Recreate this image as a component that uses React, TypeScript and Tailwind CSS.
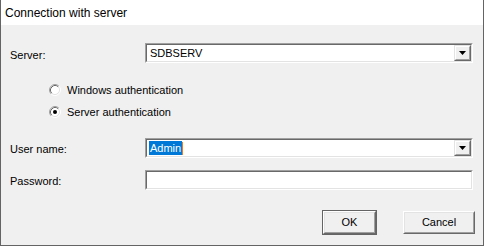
import React from 'react';

const font = { fontFamily: '"Liberation Sans", Arial, sans-serif' };

const Sunken = ({ children, className = '' }: { children?: React.ReactNode; className?: string }) => (
  <div className={`border border-t-[#a0a0a0] border-l-[#a0a0a0] border-b-white border-r-white ${className}`}>
    <div className="h-full border border-t-[#696969] border-l-[#696969] border-b-[#e3e3e3] border-r-[#e3e3e3] bg-white flex items-center">
      {children}
    </div>
  </div>
);

const DropButton = () => (
  <div className="h-[16px] w-[17px] border border-t-[#e3e3e3] border-l-[#e3e3e3] border-b-[#696969] border-r-[#696969] bg-[#f0f0f0]">
    <div className="h-full border border-t-white border-l-white border-b-[#a0a0a0] border-r-[#a0a0a0] flex items-center justify-center">
      <svg width="7" height="4" viewBox="0 0 7 4">
        <path d="M0 0h7L3.5 4z" fill="#000" />
      </svg>
    </div>
  </div>
);

const Radio = ({ checked }: { checked?: boolean }) => (
  <svg width="12" height="12" viewBox="0 0 12 12">
    <circle cx="6" cy="6" r="4.5" fill="#fff" />
    <path d="M2.11 9.89A5.5 5.5 0 0 1 9.89 2.11" fill="none" stroke="#a0a0a0" />
    <path d="M9.89 2.11A5.5 5.5 0 0 1 2.11 9.89" fill="none" stroke="#fff" />
    <path d="M2.82 9.18A4.5 4.5 0 0 1 9.18 2.82" fill="none" stroke="#696969" />
    <path d="M9.18 2.82A4.5 4.5 0 0 1 2.82 9.18" fill="none" stroke="#e3e3e3" />
    {checked && <circle cx="6" cy="6" r="2" fill="#000" />}
  </svg>
);

const Button = ({ label, isDefault, width }: { label: string; isDefault?: boolean; width: string }) => (
  <div className={`h-[25px] ${width} border ${isDefault ? 'border-[#646464]' : 'border-transparent'}`}>
    <div className="h-full border border-t-white border-l-white border-b-[#696969] border-r-[#696969] bg-[#f0f0f0]">
      <div className="h-full border border-t-[#e3e3e3] border-l-[#e3e3e3] border-b-[#a0a0a0] border-r-[#a0a0a0] flex items-center justify-center text-[11px] text-black">
        {label}
      </div>
    </div>
  </div>
);

export default function App() {
  return (
    <div className="w-[485px] h-[247px] bg-white" style={font}>
      <div className="w-[484px] h-[246px] border-x border-b border-[#646464] flex flex-col">
        <div className="h-[25px] bg-white flex items-center pl-[4px] text-[12px] text-black">
          Connection with server
        </div>
        <div className="flex-1 bg-[#f0f0f0] pl-[9px] pr-[9px] pt-[18px] text-[11px] text-black">
          <div className="flex h-[20px]">
            <div className="w-[135px] pt-[4px]">Server:</div>
            <Sunken className="w-[328px] h-[20px]">
              <span className="pl-[3px] flex-1">SDBSERV</span>
              <DropButton />
            </Sunken>
          </div>
          <div className="ml-[39px] mt-[21px] flex flex-col gap-[10px]">
            <div className="flex items-center h-[12px] gap-[6px]">
              <Radio />
              <span>Windows authentication</span>
            </div>
            <div className="flex items-center h-[12px] gap-[6px]">
              <Radio checked />
              <span>Server authentication</span>
            </div>
          </div>
          <div className="flex h-[20px] mt-[20px]">
            <div className="w-[135px] pt-[3px]">User name:</div>
            <Sunken className="w-[328px] h-[20px]">
              <div className="pl-[2px] flex-1 flex items-center">
                <span className="bg-[#0078d7] text-white leading-[14px] px-[1px]">Admin</span>
                <span className="w-px h-[13px] bg-[#f07a20]" />
              </div>
              <DropButton />
            </Sunken>
          </div>
          <div className="flex h-[20px] mt-[12px]">
            <div className="w-[135px] pt-[3px]">Password:</div>
            <Sunken className="w-[328px] h-[20px]" />
          </div>
          <div className="flex justify-end mt-[20px] -mr-[2px] gap-[25px]">
            <Button label="OK" isDefault width="w-[55px]" />
            <Button label="Cancel" width="w-[74px]" />
          </div>
        </div>
      </div>
    </div>
  );
}
